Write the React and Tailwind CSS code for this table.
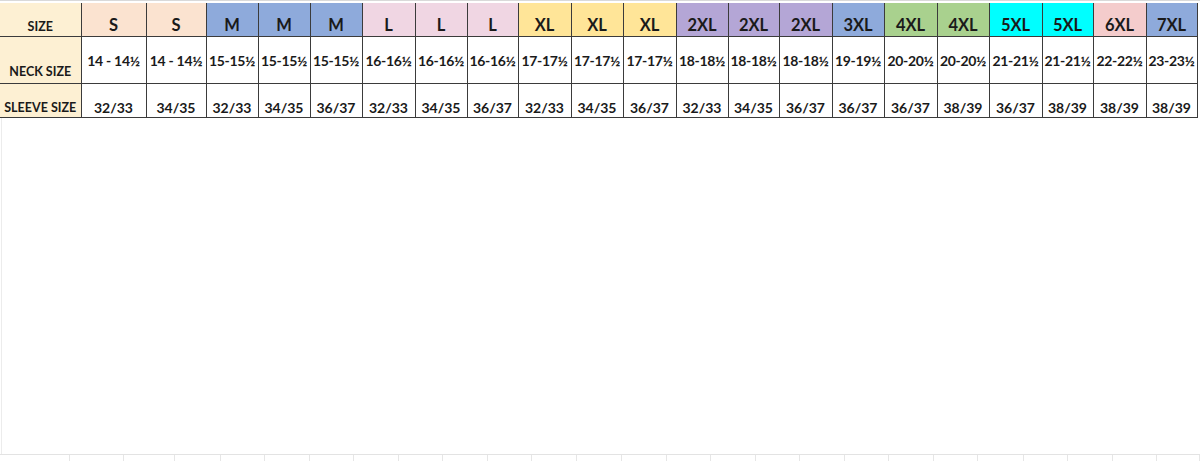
const cols = [
  { size: 'S', neck: '14 - 14½', sleeve: '32/33', w: 65, bg: 'bg-[#fbe3d0]' },
  { size: 'S', neck: '14 - 14½', sleeve: '34/35', w: 60, bg: 'bg-[#fbe3d0]' },
  { size: 'M', neck: '15-15½', sleeve: '32/33', w: 52, bg: 'bg-[#8eaadb]' },
  { size: 'M', neck: '15-15½', sleeve: '34/35', w: 52, bg: 'bg-[#8eaadb]' },
  { size: 'M', neck: '15-15½', sleeve: '36/37', w: 52, bg: 'bg-[#8eaadb]' },
  { size: 'L', neck: '16-16½', sleeve: '32/33', w: 53, bg: 'bg-[#f0d6e3]' },
  { size: 'L', neck: '16-16½', sleeve: '34/35', w: 52, bg: 'bg-[#f0d6e3]' },
  { size: 'L', neck: '16-16½', sleeve: '36/37', w: 51, bg: 'bg-[#f0d6e3]' },
  { size: 'XL', neck: '17-17½', sleeve: '32/33', w: 53, bg: 'bg-[#ffe598]' },
  { size: 'XL', neck: '17-17½', sleeve: '34/35', w: 52, bg: 'bg-[#ffe598]' },
  { size: 'XL', neck: '17-17½', sleeve: '36/37', w: 53, bg: 'bg-[#ffe598]' },
  { size: '2XL', neck: '18-18½', sleeve: '32/33', w: 52, bg: 'bg-[#b4a6d6]' },
  { size: '2XL', neck: '18-18½', sleeve: '34/35', w: 51, bg: 'bg-[#b4a6d6]' },
  { size: '2XL', neck: '18-18½', sleeve: '36/37', w: 53, bg: 'bg-[#b4a6d6]' },
  { size: '3XL', neck: '19-19½', sleeve: '36/37', w: 52, bg: 'bg-[#8eaadb]' },
  { size: '4XL', neck: '20-20½', sleeve: '36/37', w: 53, bg: 'bg-[#a9d18e]' },
  { size: '4XL', neck: '20-20½', sleeve: '38/39', w: 52, bg: 'bg-[#a9d18e]' },
  { size: '5XL', neck: '21-21½', sleeve: '36/37', w: 53, bg: 'bg-[#00ffff]' },
  { size: '5XL', neck: '21-21½', sleeve: '38/39', w: 51, bg: 'bg-[#00ffff]' },
  { size: '6XL', neck: '22-22½', sleeve: '38/39', w: 53, bg: 'bg-[#f4cccc]' },
  { size: '7XL', neck: '23-23½', sleeve: '38/39', w: 51, bg: 'bg-[#8eaadb]' },
]

// faint spreadsheet grid visible along the bottom edge
const gridBottom = [71, 56, 52, 46, 45, 46, 45, 46, 45, 46, 45, 46, 45, 46, 45, 46, 45, 46, 45, 46, 45, 46, 45, 46, 45, 44]

export default function App() {
  return (
    <div className="h-[461px] w-[1200px] bg-white flex flex-col overflow-hidden text-[#1a1a1a]" style={{ fontFamily: 'Lato, "Open Sans", sans-serif' }}>
      <div className="h-[3px] border-t border-[#d9d9d9]" />
      <table className="table-fixed border-collapse w-[1197px] font-bold">
        <colgroup>
          <col className="w-[81px]" />
          {cols.map((c, i) => (
            <col key={i} style={{ width: c.w }} />
          ))}
        </colgroup>
        <tbody>
          <tr className="h-[33px]">
            <td className="bg-[#fdf0d3] border-r border-b border-[#3b3b3b] text-[12.5px] text-center align-bottom pb-[1px] leading-[16px]">SIZE</td>
            {cols.map((c, i) => (
              <td key={i} className={`${c.bg} border border-t-0 border-[#3b3b3b] text-[16.5px] text-center align-bottom pb-0 leading-[22px]`}>
                {c.size}
              </td>
            ))}
          </tr>
          <tr className="h-[47px]">
            <td className="bg-[#fdf0d3] border-r border-b border-[#3b3b3b] text-[12.5px] text-center align-bottom pb-[3px] leading-[16px]">NECK SIZE</td>
            {cols.map((c, i) => (
              <td key={i} className="border border-[#3b3b3b] text-[14px] text-center whitespace-nowrap overflow-visible tracking-[-0.3px] pt-[2px]">
                {c.neck}
              </td>
            ))}
          </tr>
          <tr className="h-[34px]">
            <td className="bg-[#fdf0d3] border-r border-b border-[#3b3b3b] text-[12.5px] text-center align-bottom pb-[1px] leading-[16px] whitespace-nowrap">SLEEVE SIZE</td>
            {cols.map((c, i) => (
              <td key={i} className="border border-[#3b3b3b] text-[14px] text-center align-bottom pb-[1px] leading-[16px]">
                {c.sleeve}
              </td>
            ))}
          </tr>
        </tbody>
      </table>
      <div className="flex-1 border-l border-[#ececec] ml-[1px]" />
      <div className="h-[7px] flex border-t border-[#e3e3e3]">
        {gridBottom.map((w, i) => (
          <div key={i} className="h-full border-r border-[#e6e6e6]" style={{ width: w }} />
        ))}
      </div>
    </div>
  )
}
